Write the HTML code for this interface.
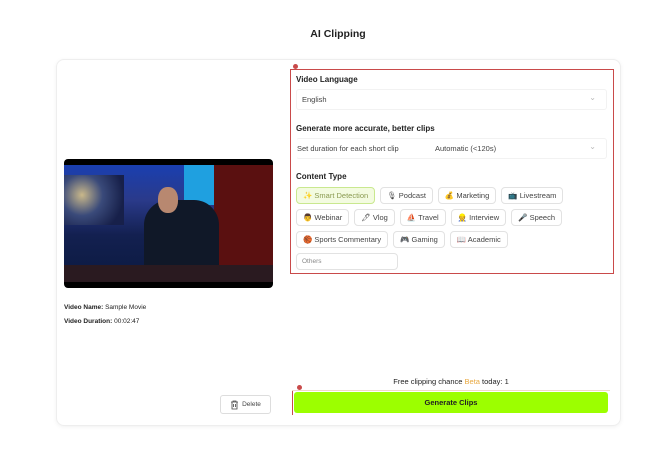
<!DOCTYPE html>
<html><head><meta charset="utf-8"><style>
*{box-sizing:border-box;margin:0;padding:0}
body{width:646px;height:450px;background:#fff;font-family:"Liberation Sans",sans-serif;color:#222;position:relative;overflow:hidden}
.title{position:absolute;top:28px;left:0;width:676px;text-align:center;font-size:10.5px;font-weight:bold}
.card{position:absolute;left:56px;top:59px;width:565px;height:367px;border:1px solid #eee;border-radius:8px;box-shadow:0 1px 4px rgba(0,0,0,.06)}
.video{position:absolute;left:64px;top:159px;width:209px;height:129px;background:#000;border-radius:4px;overflow:hidden}
.v1{position:absolute;left:0;top:6px;width:209px;height:117px;background:linear-gradient(180deg,#1a3fb0 0%,#2a3a8a 30%,#132050 60%,#0b1a40 100%)}
.info{position:absolute;left:64px;font-size:6.5px}
.info b{font-weight:bold}
.del{position:absolute;left:220px;top:395px;width:51px;height:19px;border:1px solid #ddd;border-radius:3px;font-size:6.5px;color:#444;display:flex;align-items:center;justify-content:center;gap:3px}
.box{position:absolute;left:290px;top:69px;width:324px;height:205px;border:1px solid #c94a4a}
.dot{position:absolute;width:5px;height:5px;border-radius:50%;background:#c94a4a}
.lbl{position:absolute;left:5px;font-size:8px;font-weight:bold}
.sel{position:absolute;left:5px;width:311px;height:21px;border:1px solid #f2f2f2;border-radius:3px;font-size:7.5px;color:#444;display:flex;align-items:center;padding-left:5px}
.sel::after{content:"⌄";position:absolute;right:10px;top:3px;color:#bbb;font-size:8px}
.chips{position:absolute;left:5px;top:117px;width:310px}
.row{display:flex;gap:5px;margin-bottom:5px}
.chip{height:17px;border:1px solid #e2e2e2;border-radius:4px;font-size:7.5px;color:#444;display:flex;align-items:center;padding:0 6px;gap:3px;white-space:nowrap}
.chip.on{background:#f3fbe0;border-color:#c9e88f;color:#8a9a50}
.gen{position:absolute;left:294px;top:392px;width:314px;height:21px;background:#9cff00;border-radius:3px;font-size:7.5px;font-weight:bold;display:flex;align-items:center;justify-content:center}
</style></head><body>
<div class="title">AI Clipping</div>
<div class="card"></div>
<div class="video"><div class="v1">
<div style="position:absolute;left:0;top:10px;width:60px;height:50px;background:radial-gradient(circle at 30% 40%,#c9b88a 0,#3a4a7a 40%,#17204a 80%)"></div>
<div style="position:absolute;left:120px;top:0;width:30px;height:40px;background:#1fa0e0"></div>
<div style="position:absolute;left:150px;top:0;width:59px;height:117px;background:#5a1010"></div>
<div style="position:absolute;left:80px;top:35px;width:75px;height:82px;background:#101828;border-radius:25px 25px 0 0"></div>
<div style="position:absolute;left:94px;top:22px;width:20px;height:26px;background:#b88870;border-radius:45%"></div>
<div style="position:absolute;left:0;top:100px;width:209px;height:17px;background:#2a1a20"></div>
</div></div>
<div class="info" style="top:304px"><b>Video Name:</b> Sample Movie</div>
<div class="info" style="top:318px"><b>Video Duration:</b> 00:02:47</div>
<div class="del"><svg width="9" height="10" viewBox="0 0 9 10"><path d="M1 2h7M3 2V1h3v1M2 2v7h5V2M3.5 4v3M5.5 4v3" fill="none" stroke="#444" stroke-width=".8"/></svg>Delete</div>
<div class="dot" style="left:293px;top:64px"></div>
<div class="box">
<div class="lbl" style="top:5px">Video Language</div>
<div class="sel" style="top:19px">English</div>
<div class="lbl" style="top:54px">Generate more accurate, better clips</div>
<div class="sel" style="top:68px;padding-left:0;border-left-color:transparent">Set duration for each short clip<span style="position:absolute;left:138px">Automatic (&lt;120s)</span></div>
<div class="lbl" style="top:102px">Content Type</div>
<div class="chips">
<div class="row"><div class="chip on">✨ Smart Detection</div><div class="chip">🎙 Podcast</div><div class="chip">💰 Marketing</div><div class="chip">📺 Livestream</div></div>
<div class="row"><div class="chip">👨 Webinar</div><div class="chip">🖊 Vlog</div><div class="chip">⛵ Travel</div><div class="chip">👷 Interview</div><div class="chip">🎤 Speech</div></div>
<div class="row"><div class="chip">🏀 Sports Commentary</div><div class="chip">🎮 Gaming</div><div class="chip">📖 Academic</div></div>
<div class="row"><div class="chip" style="width:102px;color:#888;font-size:6.5px;padding-left:5px">Others</div></div>
</div>
</div>
<div style="position:absolute;left:294px;top:377px;width:314px;text-align:center;font-size:7.5px">Free clipping chance <span style="color:#e8a840">Beta</span> today: 1</div>
<div class="dot" style="left:297px;top:385px"></div>
<div style="position:absolute;left:292px;top:390px;width:1px;height:25px;background:#c94a4a"></div>
<div style="position:absolute;left:292px;top:390px;width:318px;height:1px;background:#f0d8c8"></div>
<div class="gen">Generate Clips</div>
</body></html>
